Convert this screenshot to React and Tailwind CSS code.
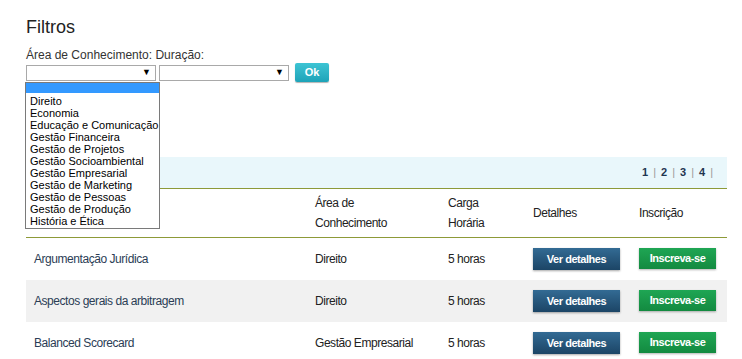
import React from "react";

const areas = [
  "Direito",
  "Economia",
  "Educação e Comunicação",
  "Gestão Financeira",
  "Gestão de Projetos",
  "Gestão Socioambiental",
  "Gestão Empresarial",
  "Gestão de Marketing",
  "Gestão de Pessoas",
  "Gestão de Produção",
  "História e Ética",
];

const cursos = [
  { nome: "Argumentação Jurídica", area: "Direito", carga: "5 horas" },
  { nome: "Aspectos gerais da arbitragem", area: "Direito", carga: "5 horas" },
  { nome: "Balanced Scorecard", area: "Gestão Empresarial", carga: "5 horas" },
];

function FakeSelect() {
  return (
    <div className="w-[130px] h-[16px] border border-[#a9a9a9] bg-white flex items-center justify-end pr-[4px]">
      <span className="text-[9px] leading-none text-black">▼</span>
    </div>
  );
}

export default function App() {
  return (
    <div className="relative w-[742px] h-[359px] bg-white overflow-hidden font-['Liberation_Sans',Arial,sans-serif] text-[#222]">
      {/* Filtros */}
      <div className="pl-[26px] pt-[16px]">
        <h1 className="text-[18px] leading-[22px] text-[#222]">Filtros</h1>
        <div className="mt-[10px] text-[12px] leading-[14px] text-[#333]">
          Área de Conhecimento: Duração:
        </div>
        <div className="mt-[1px] flex items-center gap-[3px]">
          <FakeSelect />
          <FakeSelect />
          <button className="ml-[3px] w-[34px] h-[19px] rounded-[2px] bg-gradient-to-b from-[#3dc4d4] to-[#1da3b8] text-white text-[11px] font-bold leading-none shadow-[0_1px_1px_rgba(0,0,0,0.3)]">
            Ok
          </button>
        </div>
      </div>

      {/* Tabela */}
      <div className="ml-[26px] w-[701px] mt-[75px] tracking-[-0.45px]">
        <div className="h-[31px] bg-[#e9f7fb] flex items-center justify-end pr-[14px] text-[11px] font-bold text-[#1f3550] tracking-normal">
          <span>1</span>
          <span className="mx-[5px] font-normal text-[#999]">|</span>
          <span>2</span>
          <span className="mx-[5px] font-normal text-[#999]">|</span>
          <span>3</span>
          <span className="mx-[5px] font-normal text-[#999]">|</span>
          <span>4</span>
          <span className="ml-[5px] font-normal text-[#999]">|</span>
        </div>
        <div className="border-t border-b border-[#8d9a38] h-[50px] grid grid-cols-[289px_133px_85px_106px_88px] items-center text-[12px] leading-[20px] text-[#222]">
          <div />
          <div>Área de<br />Conhecimento</div>
          <div>Carga<br />Horária</div>
          <div>Detalhes</div>
          <div>Inscrição</div>
        </div>
        {cursos.map((c, i) => (
          <div
            key={c.nome}
            className={`h-[42px] grid grid-cols-[289px_133px_85px_106px_88px] items-center text-[12px] ${i === 1 ? "bg-[#f1f1f1]" : "bg-white"}`}
          >
            <div className="pl-[8px] text-[#2b3d55]">{c.nome}</div>
            <div className="text-[#222]">{c.area}</div>
            <div className="text-[#222]">{c.carga}</div>
            <div>
              <button className="w-[87px] h-[22px] bg-gradient-to-b from-[#336b94] to-[#1c4566] text-white text-[11px] font-bold shadow-[0_1px_2px_rgba(0,0,0,0.35)]">
                Ver detalhes
              </button>
            </div>
            <div>
              <button className="w-[77px] h-[21px] bg-gradient-to-b from-[#1fa654] to-[#138a40] text-white text-[11px] font-bold shadow-[0_1px_2px_rgba(0,0,0,0.3)] -mt-[2px]">
                Inscreva-se
              </button>
            </div>
          </div>
        ))}
      </div>

      {/* Lista aberta do select */}
      <div className="absolute left-[25px] top-[82px] w-[135px] border border-[#7a7a7a] bg-white text-[11px] leading-[12px] text-black">
        <div className="h-[10px] bg-[#3399ff]" />
        <div className="pt-[2px] pb-[1px]">
          {areas.map((a) => (
            <div key={a} className="pl-[4px] whitespace-nowrap">{a}</div>
          ))}
        </div>
      </div>
    </div>
  );
}
